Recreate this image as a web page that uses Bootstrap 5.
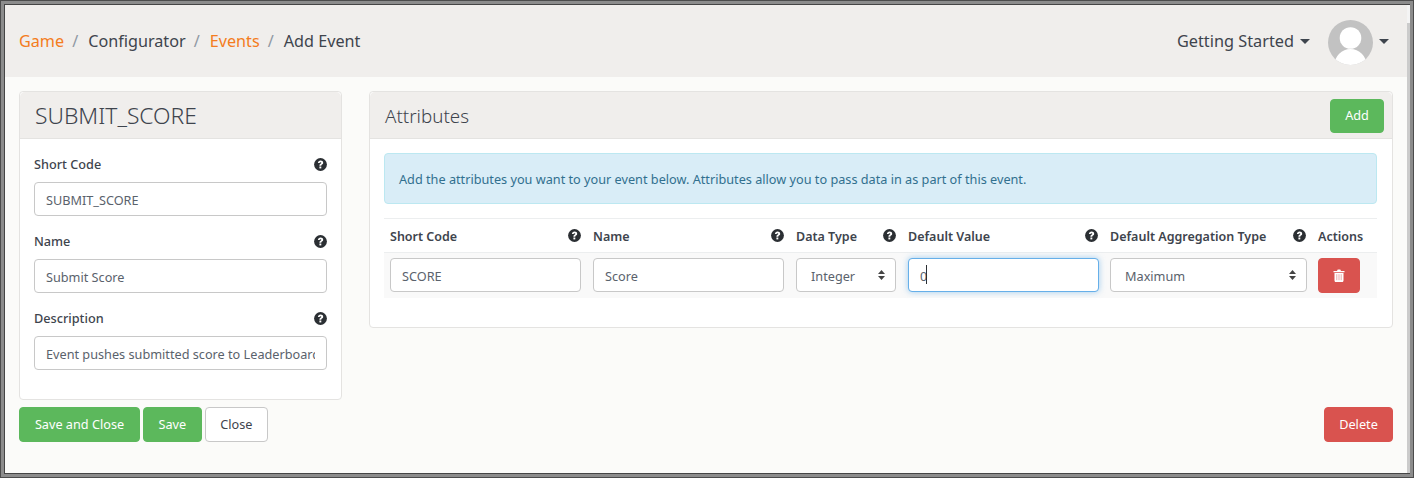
<!DOCTYPE html>
<html lang="en">

<head>
    <meta charset="UTF-8">
    <meta name="viewport" content="width=device-width, initial-scale=1.0">
    <title>Add Event</title>
    <link href="https://cdn.jsdelivr.net/npm/bootstrap@5.3.3/dist/css/bootstrap.min.css" rel="stylesheet">
    <script src="https://cdn.jsdelivr.net/npm/bootstrap@5.3.3/dist/js/bootstrap.bundle.min.js"></script>
    <style>
        html, body {
            height: 100%;
        }

        body {
            background-color: #6f6f6f;
            color: #3e444d;
            font-family: "Noto Sans", "Liberation Sans", sans-serif;
            font-size: 12.7px;
            overflow: hidden;
        }

        .app-frame {
            position: relative;
            height: 478px;
            padding: 5px 6px 5px 5px;
            border: 1px solid #4c4c4c;
            box-shadow: inset 0 0 0 3px #8c8c8c, inset 0 0 0 4px #454545;
            background-color: #fbfbf9;
        }

        .app-inner {
            margin: -1px;
            height: calc(100% + 2px);
            background-color: #fbfbf9;
        }

        .scroll-strip {
            position: absolute;
            top: 4px;
            right: 3px;
            bottom: 4px;
            width: 3px;
            background: linear-gradient(#f4f4f4 18px, #cbcbcb 18px);
        }

        .top-bar {
            height: 72px;
            background-color: #f0eeec;
            padding: 0 19px 0 14px;
        }

        .crumbs {
            font-size: 16.2px;
            margin: 0;
        }

        .crumbs .breadcrumb-item + .breadcrumb-item {
            padding-left: 8px;
        }

        .crumbs .breadcrumb-item + .breadcrumb-item::before {
            padding-right: 10px;
            color: #8f98a3;
        }

        .crumbs a {
            color: #f47c20;
            text-decoration: none;
        }

        .crumbs .breadcrumb-item.active {
            color: #3e444d;
        }

        .top-link {
            font-size: 16.3px;
            margin-right: 6px;
            color: #3e444d;
            text-decoration: none;
        }

        .caret-down {
            display: inline-block;
            border-top: 5px solid #3e444d;
            border-left: 5.5px solid transparent;
            border-right: 5.5px solid transparent;
        }

        .avatar-pic {
            width: 45px;
            height: 45px;
            margin: 3px 6px 0 18px;
            border-radius: 50%;
            overflow: hidden;
        }

        .content-area {
            padding: 14px 15px 0 14px;
        }

        .left-col {
            width: 323px;
            flex: none;
        }

        .panel-box {
            border: 1px solid #e4e3e1;
            border-radius: 4px;
            background-color: #fff;
        }

        .panel-box .card-header {
            height: 47px;
            padding: 2px 8px 0 15px;
            background-color: #f0eeec;
            border-bottom: 1px solid #e4e3e1;
            font-size: 22.8px;
            font-weight: 300;
            color: #3e444d;
        }

        .panel-box .panel-title-sm {
            font-size: 18.8px;
        }

        .left-body {
            padding: 16px 14px 13px;
        }

        .field-row {
            margin-bottom: 16px;
        }

        .field-label {
            height: 20px;
            margin-bottom: 7px;
            font-weight: 500;
        }

        .help-dot {
            width: 13px;
            height: 13px;
            margin-top: -2px;
            flex: none;
        }

        .form-control.ev-input,
        .form-select.ev-input {
            height: 34px;
            padding: 2px 11px 0;
            font-size: 12.7px;
            color: #5a626c;
            border: 1px solid #c8c8c8;
            border-radius: 4px;
            background-color: #fff;
        }

        .form-select.ev-input {
            padding: 3px 0 0 14px;
            background-image: none;
            appearance: none;
        }

        .select-wrap, .caret-wrap {
            position: relative;
        }

        .select-arrows {
            position: absolute;
            right: 11px;
            top: 12px;
            width: 7px;
            height: 10px;
            pointer-events: none;
        }

        .text-caret {
            position: absolute;
            left: 18px;
            top: 7px;
            width: 1px;
            height: 19px;
            background-color: #2b2f33;
        }

        .form-control.ev-input.is-focused {
            border-color: #66afe9;
            box-shadow: 0 0 6px rgba(102, 175, 233, .6);
        }

        .right-col {
            width: 1024px;
            margin-left: 27px;
            flex: none;
        }

        .right-body {
            padding: 14px 15px 29px 14px;
        }

        .info-box {
            height: 51px;
            margin-bottom: 14px;
            padding: 2px 14px 0;
            background-color: #d9edf7;
            border: 1px solid #bce8f1;
            border-radius: 4px;
            color: #31708f;
        }

        .attr-table {
            border-top: 1px solid #eceeef;
            margin: 0;
            table-layout: fixed;
            width: 993px;
            border-collapse: separate;
            border-spacing: 0;
            color: #3e444d;
        }

        .attr-table th {
            height: 34px;
            padding: 3px 6px 0;
            font-weight: 600;
            font-size: 12.5px;
            vertical-align: middle;
            color: #3e444d;
            background: transparent;
            border-bottom: 1px solid #eceeef;
        }

        .attr-table th .help-dot {
            margin-top: -4px;
        }

        .attr-table td {
            padding: 5px 6px;
            background-color: #f9f9f9;
            border: 0;
        }

        .attr-table td:nth-child(4),
        .attr-table td:nth-child(5) {
            padding-right: 5px;
        }

        .btn.ev-btn {
            height: 35px;
            padding: 0 14.5px;
            font-size: 12.7px;
            border-radius: 4px;
        }

        .btn.ev-add {
            height: 34px;
            width: 54px;
            padding: 0;
        }

        .btn.ev-save-close {
            width: 121px;
            padding: 0;
        }

        .btn.ev-delete {
            width: 69px;
            padding: 0;
        }

        .btn.ev-green {
            background-color: #5cb85c;
            border-color: #5cb85c;
            color: #fff;
        }

        .btn.ev-red {
            background-color: #d9534f;
            border-color: #d9534f;
            color: #fff;
        }

        .btn.ev-light {
            background-color: #fff;
            border-color: #c8c8c8;
            color: #3e444d;
        }

        .btn-trash {
            width: 42px;
            padding: 0 !important;
        }

        .bottom-row {
            padding: 7px 15px 0 14px;
        }

        .save-group {
            gap: 3px;
        }
    </style>
</head>

<body>
    <svg width="0" height="0" class="d-none">
        <symbol id="q-help" viewBox="0 0 13 13">
            <circle cx="6.5" cy="6.5" r="6.4" fill="#2b2f33" />
            <path d="M3.900 5c.1-1.500 1.200-2.400 2.700-2.400 1.500 0 2.600.9 2.600 2.100 0 1-.6 1.500-1.200 1.900-.5.300-.7.500-.7 1.100H5.400c0-1.100.4-1.600 1.100-2 .5-.3.8-.5.8-.9 0-.4-.3-.6-.8-.6-.5 0-.8.300-.9.800z" fill="#fff" />
            <rect x="5.400" y="8.500" width="1.900" height="1.900" fill="#fff" />
        </symbol>
        <symbol id="updown" viewBox="0 0 7 10">
            <path d="M3.500 0 7 4H0zM3.500 10 0 6h7z" fill="#444" />
        </symbol>
    </svg>

    <div class="app-frame">
        <div class="app-inner d-flex flex-column">
            <div class="top-bar d-flex align-items-center justify-content-between">
                <ol class="breadcrumb crumbs">
                    <li class="breadcrumb-item"><a href="#">Game</a></li>
                    <li class="breadcrumb-item active">Configurator</li>
                    <li class="breadcrumb-item"><a href="#">Events</a></li>
                    <li class="breadcrumb-item active">Add Event</li>
                </ol>
                <div class="d-flex align-items-center">
                    <a href="#" class="top-link">Getting Started</a>
                    <span class="caret-down"></span>
                    <svg class="avatar-pic" viewBox="0 0 45 45">
                        <rect width="45" height="45" fill="#c2c2c2" />
                        <circle cx="22.500" cy="18" r="10.800" fill="#fff" />
                        <ellipse cx="22.500" cy="45" rx="16" ry="16" fill="#fff" />
                    </svg>
                    <span class="caret-down"></span>
                </div>
            </div>

            <div class="content-area d-flex">
                <div class="left-col">
                    <div class="card panel-box">
                        <div class="card-header d-flex align-items-center">SUBMIT_SCORE</div>
                        <div class="left-body">
                            <div class="field-row">
                                <div class="field-label d-flex justify-content-between align-items-center">Short Code
                                    <svg class="help-dot"><use href="#q-help" /></svg></div>
                                <input type="text" class="form-control ev-input" value="SUBMIT_SCORE">
                            </div>
                            <div class="field-row">
                                <div class="field-label d-flex justify-content-between align-items-center">Name
                                    <svg class="help-dot"><use href="#q-help" /></svg></div>
                                <input type="text" class="form-control ev-input" value="Submit Score">
                            </div>
                            <div class="field-row">
                                <div class="field-label d-flex justify-content-between align-items-center">Description
                                    <svg class="help-dot"><use href="#q-help" /></svg></div>
                                <input type="text" class="form-control ev-input" value="Event pushes submitted score to Leaderboard">
                            </div>
                        </div>
                    </div>
                </div>

                <div class="right-col">
                    <div class="card panel-box">
                        <div class="card-header panel-title-sm d-flex align-items-center justify-content-between">Attributes
                            <button class="btn ev-btn ev-add ev-green">Add</button>
                        </div>
                        <div class="right-body">
                            <div class="info-box d-flex align-items-center">Add the attributes you want to your event below. Attributes allow you to pass data in as part of this event.</div>
                            <table class="table attr-table">
                                <colgroup>
                                    <col style="width:203px">
                                    <col style="width:203px">
                                    <col style="width:112px">
                                    <col style="width:202px">
                                    <col style="width:208px">
                                    <col style="width:65px">
                                </colgroup>
                                <thead>
                                    <tr>
                                        <th><div class="d-flex justify-content-between align-items-center">Short Code <svg class="help-dot"><use href="#q-help" /></svg></div></th>
                                        <th><div class="d-flex justify-content-between align-items-center">Name <svg class="help-dot"><use href="#q-help" /></svg></div></th>
                                        <th><div class="d-flex justify-content-between align-items-center">Data Type <svg class="help-dot"><use href="#q-help" /></svg></div></th>
                                        <th><div class="d-flex justify-content-between align-items-center">Default Value <svg class="help-dot"><use href="#q-help" /></svg></div></th>
                                        <th><div class="d-flex justify-content-between align-items-center">Default Aggregation Type <svg class="help-dot"><use href="#q-help" /></svg></div></th>
                                        <th>Actions</th>
                                    </tr>
                                </thead>
                                <tbody>
                                    <tr>
                                        <td><input type="text" class="form-control ev-input" value="SCORE"></td>
                                        <td><input type="text" class="form-control ev-input" value="Score"></td>
                                        <td><div class="select-wrap"><select class="form-select ev-input"><option>Integer</option></select><svg class="select-arrows"><use href="#updown" /></svg></div></td>
                                        <td><div class="caret-wrap"><input type="text" class="form-control ev-input is-focused" value="0"><span class="text-caret"></span></div></td>
                                        <td><div class="select-wrap"><select class="form-select ev-input"><option>Maximum</option></select><svg class="select-arrows"><use href="#updown" /></svg></div></td>
                                        <td>
                                            <button class="btn ev-btn ev-red btn-trash d-flex align-items-center justify-content-center">
                                                <svg width="12" height="13" viewBox="0 0 12 13"><path d="M4 2 4.700.5h2.600L8 2h3.500v1.300H.5V2zM1.500 4h9v7.500c0 .8-.5 1.500-1.200 1.500H2.700c-.7 0-1.200-.7-1.200-1.500z" fill="#fff" /><path d="M3.800 5.200v6M6 5.200v6M8.200 5.200v6" stroke="#e8a29f" stroke-width=".9" /></svg>
                                            </button>
                                        </td>
                                    </tr>
                                </tbody>
                            </table>
                        </div>
                    </div>
                </div>
            </div>

            <div class="bottom-row d-flex justify-content-between">
                <div class="d-flex save-group">
                    <button class="btn ev-btn ev-save-close ev-green">Save and Close</button>
                    <button class="btn ev-btn ev-green">Save</button>
                    <button class="btn ev-btn ev-light">Close</button>
                </div>
                <button class="btn ev-btn ev-delete ev-red">Delete</button>
            </div>
        </div>
        <div class="scroll-strip"></div>
    </div>
</body>

</html>
